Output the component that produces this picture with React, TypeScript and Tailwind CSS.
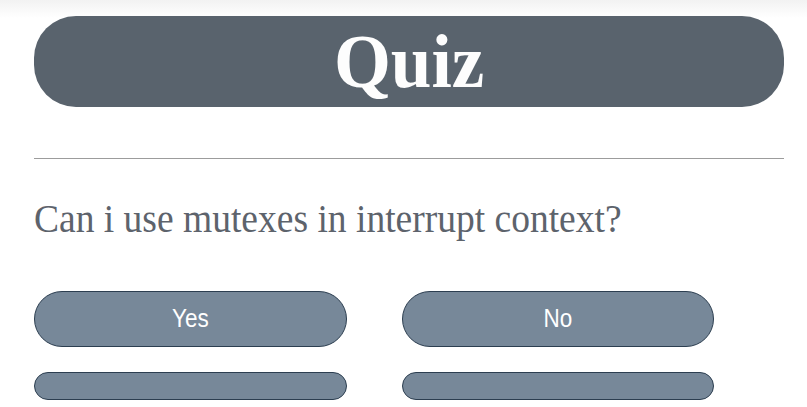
import React from 'react';

const answers = ['Yes', 'No', '', ''];

export default function App() {
  return (
    <div className="min-h-[407px] bg-[linear-gradient(to_bottom,#f2f2f2,#ffffff_18px)] pl-[34px] pt-[16px]">
      <div className="w-[750px]">
        <header className="flex h-[91px] items-center justify-center rounded-[42px] bg-[#59636d]">
          <h1 className="inline-block scale-x-[0.95] font-['Liberation_Serif',serif] text-[77px] font-bold leading-none text-[#fdfdfd]">
            Quiz
          </h1>
        </header>

        <hr className="mt-[51px] border-t border-[#9c9c9c]" />

        <p className="mt-[36px] h-[46px] font-['Liberation_Serif',serif] text-[41px] leading-[46px] text-[#5d636c]">
          <span className="inline-block origin-left scale-x-[0.915]">Can i use mutexes in interrupt context?</span>
        </p>

        <div className="mt-[50px] grid grid-cols-[313px_312px] gap-x-[55px] gap-y-[25px]">
          {answers.map((label, i) => (
            <button
              key={i}
              className={`flex items-center justify-center rounded-full border border-[#2c3e50] bg-[#778899] font-['Liberation_Sans',sans-serif] text-[25px] text-white ${
                label ? 'h-[56px]' : 'h-[28px]'
              }`}
            >
              <span className="inline-block scale-x-[0.9]">{label}</span>
            </button>
          ))}
        </div>
      </div>
    </div>
  );
}
